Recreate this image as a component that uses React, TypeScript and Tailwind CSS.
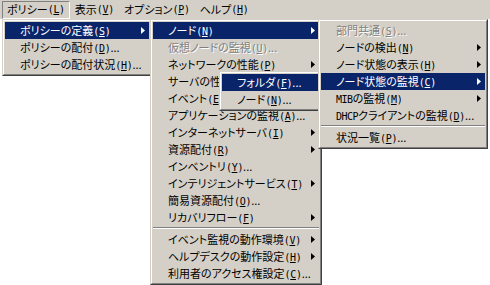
import React from 'react';

// Classic Windows 2000 style cascading menus, several levels open at once.

type Row =
  | { label: string; k: string; tail?: string; sub?: boolean; disabled?: boolean; active?: boolean }
  | 'sep';

const policyMenu: Row[] = [
  { label: 'ポリシーの定義', k: 'S', sub: true, active: true },
  { label: 'ポリシーの配付', k: 'D', tail: '...' },
  { label: 'ポリシーの配付状況', k: 'H', tail: '...' },
];

const defineMenu: Row[] = [
  { label: 'ノード', k: 'N', sub: true, active: true },
  { label: '仮想ノードの監視', k: 'U', tail: '...', disabled: true },
  { label: 'ネットワークの性能', k: 'P', sub: true },
  { label: 'サーバの性能', k: 'V', sub: true },
  { label: 'イベント', k: 'E', sub: true },
  { label: 'アプリケーションの監視', k: 'A', tail: '...' },
  { label: 'インターネットサーバ', k: 'I', sub: true },
  { label: '資源配付', k: 'R', sub: true },
  { label: 'インベントリ', k: 'Y', tail: '...' },
  { label: 'インテリジェントサービス', k: 'T', sub: true },
  { label: '簡易資源配付', k: 'O', tail: '...' },
  { label: 'リカバリフロー', k: 'F', sub: true },
  'sep',
  { label: 'イベント監視の動作環境', k: 'V', sub: true },
  { label: 'ヘルプデスクの動作設定', k: 'H', sub: true },
  { label: '利用者のアクセス権設定', k: 'C', tail: '...' },
];

const nodeMenu: Row[] = [
  { label: '部門共通', k: 'S', tail: '...', disabled: true },
  { label: 'ノードの検出', k: 'N', sub: true },
  { label: 'ノード状態の表示', k: 'H', sub: true },
  { label: 'ノード状態の監視', k: 'C', sub: true, active: true },
  { label: 'MIBの監視', k: 'M', sub: true },
  { label: 'DHCPクライアントの監視', k: 'D', tail: '...' },
  'sep',
  { label: '状況一覧', k: 'P', tail: '...' },
];

const serverMenu: Row[] = [
  { label: 'フォルダ', k: 'F', tail: '...', active: true },
  { label: 'ノード', k: 'N', tail: '...' },
];

const mono = "font-['DejaVu_Sans_Mono',monospace] text-[10px]";

// half-width latin runs look like the old bitmap font, so give them a mono face
function Label({ text }: { text: string }) {
  const parts = text.split(/([A-Za-z]+)/);
  return (
    <>
      {parts.map((p, i) =>
        /^[A-Za-z]+$/.test(p) ? (
          <span key={i} className={`${mono} tracking-[-0.5px]`}>
            {p}
          </span>
        ) : (
          p
        ),
      )}
    </>
  );
}

function Arrow() {
  return (
    <svg width="4" height="7" viewBox="0 0 4 7" className="absolute right-[4px] top-[5px]">
      <polygon points="0,0 4,3.5 0,7" fill="currentColor" />
    </svg>
  );
}

function Mnemonic({ k }: { k: string }) {
  return (
    <span className={`${mono} tracking-[-0.3px]`}>
      (<span className="underline underline-offset-[1px]">{k}</span>)
    </span>
  );
}

function Menu({ rows, className }: { rows: Row[]; className: string }) {
  return (
    <div
      className={`absolute border border-t-[#d4d0c8] border-l-[#d4d0c8] border-r-[#404040] border-b-[#404040] bg-[#d4d0c8] ${className}`}
    >
      <div className="border border-t-white border-l-white border-r-[#808080] border-b-[#808080] p-px">
        {rows.map((r, i) =>
          r === 'sep' ? (
            <div key={i} className="pt-[1px] pb-[2px]">
              <div className="h-px bg-[#808080]" />
              <div className="h-px bg-white" />
            </div>
          ) : (
            <div
              key={i}
              className={`relative flex h-[17px] items-center whitespace-nowrap pl-[15px] ${
                r.active
                  ? 'bg-[#0a246a] text-white'
                  : r.disabled
                    ? 'text-[#808080] [text-shadow:1px_1px_0_#fff]'
                    : 'text-black'
              }`}
            >
              <span>
                <Label text={r.label} />
                <Mnemonic k={r.k} />
                {r.tail}
              </span>
              {r.sub && <Arrow />}
            </div>
          ),
        )}
      </div>
    </div>
  );
}

export default function App() {
  const bar = [
    { label: 'ポリシー', k: 'L', open: true },
    { label: '表示', k: 'V' },
    { label: 'オプション', k: 'P' },
    { label: 'ヘルプ', k: 'H' },
  ];

  return (
    <div className="relative h-[285px] w-[490px] overflow-hidden bg-white font-['Noto_Sans_CJK_JP',sans-serif] text-[11px] leading-none text-black [font-feature-settings:'palt']">
      <div className="flex h-[19px] items-center bg-[#d4d0c8] pl-[2px]">
        {bar.map((b) => (
          <div
            key={b.label}
            className={`flex h-[18px] items-center border px-[4px] ${
              b.open
                ? 'border-t-[#808080] border-l-[#808080] border-r-white border-b-white'
                : 'border-transparent'
            }`}
          >
            {b.label}
            <Mnemonic k={b.k} />
          </div>
        ))}
      </div>

      <Menu rows={policyMenu} className="left-[2px] top-[19px] w-[150px]" />
      <Menu rows={defineMenu} className="left-[150px] top-[19px] w-[172px]" />
      <Menu rows={serverMenu} className="left-[219px] top-[71px] w-[103px]" />
      <Menu rows={nodeMenu} className="left-[318px] top-[19px] w-[170px]" />
    </div>
  );
}
